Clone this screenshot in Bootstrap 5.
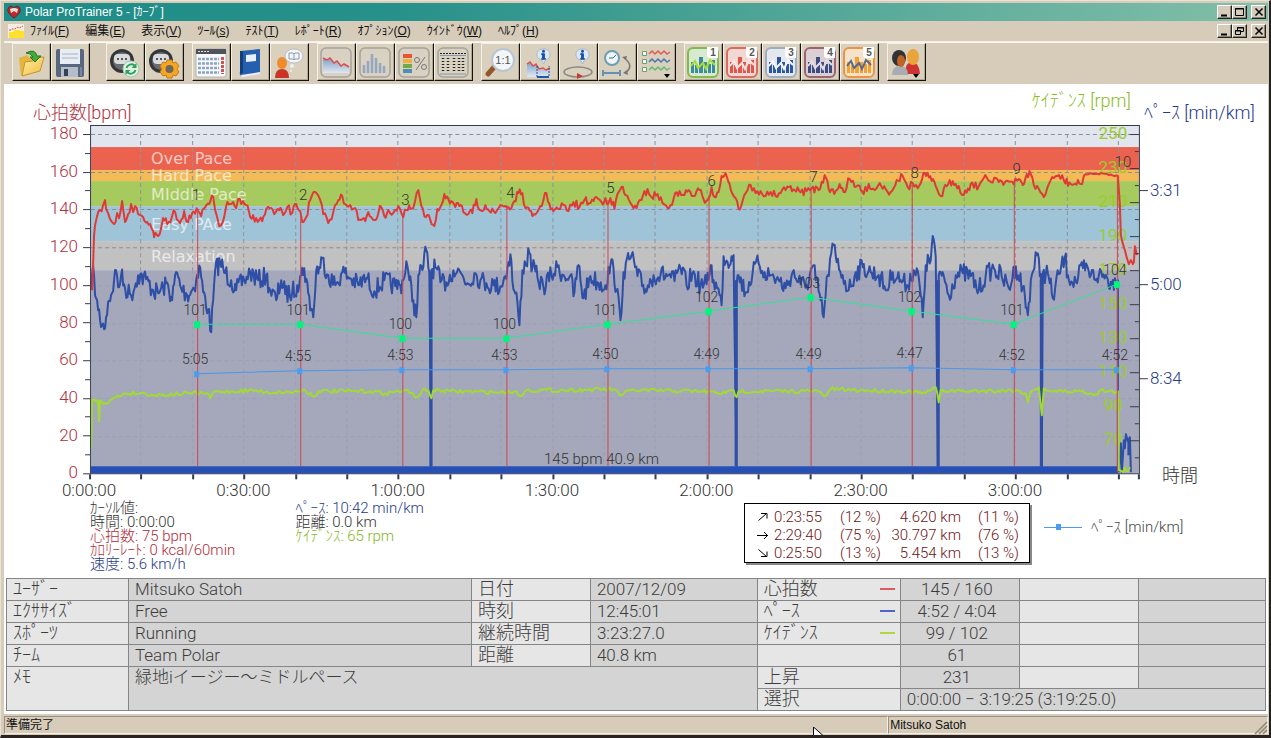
<!DOCTYPE html>
<html lang="ja">
<head>
<meta charset="utf-8">
<meta name="viewport" content="width=device-width, initial-scale=1">
<title>Polar ProTrainer 5 - [ｶｰﾌﾞ]</title>
<link rel="stylesheet" href="https://cdn.jsdelivr.net/npm/bootstrap@5.3.0/dist/css/bootstrap.min.css">
<style>
:root{--face:#d6ccb9;--ui:"Liberation Sans","Noto Sans CJK JP",sans-serif;--thin:Roboto,"Noto Sans CJK JP",sans-serif}
body{font-family:var(--ui);font-size:12px;line-height:16px;color:#111;background:var(--face)}
.window{min-height:100vh;background:var(--face);border:1px solid #e9e3d6;border-right:2px solid #222;border-bottom:3px solid #2a2320;padding:2px 1px 0 3px}
.titlebar{height:18px;background:linear-gradient(90deg,#1e8d88,#26908a 30%,#82bfa8);color:#fff;padding:0 2px 0 3px}
.menubar{height:20px;padding:0 2px 0 4px}
.menubar .menu-item{border:0;background:none;padding:0;color:#111;line-height:18px;white-space:nowrap}
.menubar .menus{gap:16px;margin-left:6px}
.cap-btn{width:15px;height:14px;padding:0;border:1px solid;border-color:#fff #222 #222 #fff;background:var(--face);display:flex;align-items:center;justify-content:center;box-shadow:inset -1px -1px #8d8577}
.toolbar{border-top:1px solid #f5f0e5;padding:1px 0 3px 8px;box-shadow:inset 0 1px #fbf7ee}
.tool-group{margin-right:16px}
.tool-group.near{margin-right:8px}
.tool{width:39px;height:38px;padding:0;background:#d9d0be;border:1px solid;border-color:#f6f1e6 #15120e #15120e #f6f1e6;box-shadow:inset -1px -1px #b0a796;display:block}
.tool svg{display:block;width:36px;height:35px}
.work{background:#fff;flex:1 0 auto;padding-bottom:3px;font-family:var(--thin);font-weight:300}
.chart{display:block;width:100%;height:auto}
.readout{display:grid;grid-template-columns:86fr 205fr 448fr 524px;min-height:78px;font-size:15px;line-height:14px;color:#333}
.readout .values{padding-top:1px;white-space:nowrap}
.t-red{color:#b02c38}.t-blue{color:#1f3a88}.t-green{color:#86b81e}
.slopes{width:286px;height:60px;margin-top:3px;border:1px solid #000;box-shadow:2px 2px #888;color:#6e1414;font-size:15px;line-height:18px;padding:4px 10px 0 8px;background:#fff}
.slopes table{width:266px;table-layout:fixed}
.slopes td,.slopes th{padding:0;text-align:right;white-space:nowrap;font-weight:300}
.slopes th{text-align:left;color:#000}
.slopes .c-dir{width:20px}.slopes .c-time{width:49px}.slopes .c-pct{width:59px}.slopes .c-dist{width:80px}
.key{margin:20px 0 0 14px;font-size:15px;color:#444;gap:9px;height:14px}
.summary{width:100%;padding:0 2px}
.summary table{width:100%;table-layout:fixed;border-collapse:collapse;font-size:18px;line-height:20px;color:#3c3c3c}
.summary td,.summary th{border:1px solid #858585;height:22px;padding:0 6px 1px 6px;background:#d4d4d4;font-weight:300;white-space:nowrap;overflow:hidden;vertical-align:top}
.summary td{font-size:17px}
.summary th,.summary .pale{background:#e6e6e6}
.summary .mid{text-align:center;padding-right:12px}
.swatch{float:right;width:15px;height:2px;margin:9px -1px 0 0}
.status{height:21px;font-size:12px;padding-top:2px}
.status .pane{border:1px solid;border-color:#989080 #f5f0e5 #f5f0e5 #989080;height:18px;line-height:16px;padding-left:1px}
.pane-main{flex:884 1 0}.pane-user{flex:378 1 0}
.pointer{left:64%;top:13px;width:13px;height:8px}
</style>
</head>
<body>
<div class="window d-flex flex-column position-relative overflow-hidden">
  <header class="titlebar d-flex align-items-center">
    <svg width="14" height="14" viewBox="0 0 14 14" aria-hidden="true"><path d="M7 13C3 10 0 7 1 4C2 0 6 1 7 3C8 1 12 0 13 4C14 7 11 10 7 13Z" fill="#c4262c" stroke="#4a2d32"/><path d="M3 4Q7 2 11 4L10 8L7 6L4 8Z" fill="#eadfdf"/></svg>
    <span class="ms-1">Polar ProTrainer 5 - [ｶｰﾌﾞ]</span>
    <div class="d-flex ms-auto">
      <button class="cap-btn" aria-label="Minimize"><svg width="11" height="10"><path d="M2 8.5h6" stroke="#000" stroke-width="2"/></svg></button>
      <button class="cap-btn" aria-label="Maximize"><svg width="11" height="10"><path d="M1.500 1.500h8v7h-8zM1 2h9" fill="none" stroke="#000"/></svg></button>
      <button class="cap-btn ms-1" aria-label="Close"><svg width="10" height="10"><path d="M1.500 1.500l7 7M8.500 1.500l-7 7" stroke="#000" stroke-width="1.500"/></svg></button>
    </div>
  </header>
  <nav class="menubar d-flex align-items-center">
    <svg width="16" height="14" viewBox="0 0 16 14" aria-hidden="true"><path d="M0 0h16v14H0z" fill="#f3eee2"/><path d="M1 8h4l2-2h4l2 1h3v7H1z" fill="#ffe12b"/><path d="M1 6h2l1-1h3l2-2 2 1 2-1 2-1" fill="none" stroke="#e44" stroke-dasharray="2 1"/></svg>
    <div class="menus d-flex">
      <button class="menu-item">ﾌｧｲﾙ(<u>F</u>)</button><button class="menu-item">編集(<u>E</u>)</button><button class="menu-item">表示(<u>V</u>)</button><button class="menu-item">ﾂｰﾙ(<u>s</u>)</button><button class="menu-item">ﾃｽﾄ(<u>T</u>)</button><button class="menu-item">ﾚﾎﾟｰﾄ(<u>R</u>)</button><button class="menu-item">ｵﾌﾟｼｮﾝ(<u>O</u>)</button><button class="menu-item">ｳｲﾝﾄﾞｳ(<u>W</u>)</button><button class="menu-item">ﾍﾙﾌﾟ(<u>H</u>)</button>
    </div>
    <div class="d-flex ms-auto">
      <button class="cap-btn" aria-label="Minimize document"><svg width="11" height="10"><path d="M2 8.500h6" stroke="#000" stroke-width="2"/></svg></button>
      <button class="cap-btn" aria-label="Restore document"><svg width="11" height="10"><path d="M3.500 4V1.500h6v4H7M3 2h7M1.500 4.500h5v4h-5zM1 5h6" fill="none" stroke="#000"/></svg></button>
      <button class="cap-btn ms-1" aria-label="Close document"><svg width="10" height="10"><path d="M1.500 1.500l7 7M8.500 1.500l-7 7" stroke="#000" stroke-width="1.500"/></svg></button>
    </div>
  </nav>

  <svg width="0" height="0" class="position-absolute" aria-hidden="true">
    <defs>
      <linearGradient id="fade" x2="0" y2="1"><stop stop-color="#7f9fc4"/><stop offset="1" stop-color="#dfe7f1"/></linearGradient>
      <linearGradient id="folder" x2="1" y2="1"><stop stop-color="#fff0a5"/><stop offset="1" stop-color="#f0bb3e"/></linearGradient>
      <symbol id="watch" viewBox="0 0 36 35"><circle cx="15" cy="16" r="12" fill="#34363a"/><circle cx="15" cy="16" r="9" fill="#686b70"/><rect x="7" y="9" width="16" height="10" rx="4" fill="#d9dbdd"/><path d="M10 14h2m2 0h2m2 0h2" stroke="#555" stroke-width="2"/></symbol>
      <symbol id="frame" viewBox="0 0 36 35"><rect x="3" y="3" width="30" height="29" rx="5" fill="#d9d1c1" stroke="#a5a29c" stroke-width="1.500"/></symbol>
      <symbol id="info" viewBox="0 0 16 18"><path d="M8 1C3 1 1 4 1 7s2 5 5 6l2 4 2-4c3-1 5-3 5-6s-2-6-7-6z" fill="#dce9f4" stroke="#a2b4c8"/><circle cx="8" cy="3.500" r="1.600" fill="#1b4fa6"/><path d="M6 6h3v5h1v1H6v-1h1V7H6z" fill="#1b4fa6" stroke="#1b4fa6"/></symbol>
      <symbol id="bars" viewBox="0 0 36 35"><rect x="3" y="3" width="30" height="29" rx="5" fill="var(--tint)" stroke="var(--edge)" stroke-width="2"/><path d="M6 28V17h3v11zm4 0V20h3v8zm4 0V12h4v16zm5 0V17h3v11zm4 0V19h3v9zm4 0V15h3v13z" fill="var(--bar)"/><path d="M6 21l4-5 3 7 5-5 3 6 4-9 5 5" fill="none" stroke="var(--line)" stroke-width="2"/><path d="M22 2h11v11h-8q-3 0-3-3z" fill="#fff"/></symbol>
    </defs>
  </svg>
  <div class="toolbar d-flex">
    <div class="tool-group d-flex">
      <button class="tool" aria-label="開く"><svg viewBox="0 0 36 35"><path d="M6 13l8-3 3 3 11-2 1 4-8 13-13 3z" fill="#e4b63e"/><path d="M9 31l3-14 8-1 3-3 8-1-4 14z" fill="url(#folder)" stroke="#c8952c"/><path d="M13 8q9-5 11 3h4l-6 6-5-5h3q-2-4-7-4z" fill="#43ac38" stroke="#237524"/></svg></button>
      <button class="tool" aria-label="保存"><svg viewBox="0 0 36 35"><rect x="4" y="4" width="28" height="28" rx="2" fill="#586680"/><path d="M8 4h20v15H8z" fill="#e8edf3"/><path d="M10 9h16M10 13h16" stroke="#a8b2c0"/><path d="M9 22h17v10H9z" fill="#b4bdca"/><path d="M12 24h4v7h-4z" fill="#35405a"/><path d="M28 22h2v9h-2z" fill="#7887a2"/></svg></button>
    </div>
    <div class="tool-group near d-flex">
      <button class="tool" aria-label="転送"><svg viewBox="0 0 36 35"><use href="#watch"/><circle cx="24" cy="24" r="8" fill="#e2f1e6" stroke="#9fc7ad"/><path d="M19.500 23a5 5 0 0 1 8-2.500M28.500 25a5 5 0 0 1-8 2.500" fill="none" stroke="#2ba05a" stroke-width="2"/><path d="M29.500 18v5h-5zM18.500 30v-5h5z" fill="#2ba05a"/></svg></button>
      <button class="tool" aria-label="機器設定"><svg viewBox="0 0 36 35"><use href="#watch"/><path d="M21 15h5l1 3 3-1 3 4-2 3 2 3-3 4-3-1-1 3h-5l-1-3-3 1-3-4 2-3-2-3 3-4 3 1z" fill="#f5a623" stroke="#c87d10"/><circle cx="23.500" cy="24" r="4" fill="#6f6759"/></svg></button>
    </div>
    <div class="tool-group near d-flex">
      <button class="tool" aria-label="カレンダー"><svg viewBox="0 0 36 35"><rect x="3" y="4" width="30" height="28" rx="2" fill="#f8f9fb" stroke="#b3b4b9"/><path d="M3 4h30v5H3z" fill="#50535a"/><path d="M5 6.500h12" stroke="#ddd" stroke-dasharray="2 1"/><path d="M5 14h21M5 18.500h21M5 23h21M5 27.500h21" stroke="#8ba3c5" stroke-width="2.500" stroke-dasharray="3 1"/><path d="M29.500 12v17" stroke="#d45454" stroke-width="3" stroke-dasharray="3 1"/></svg></button>
      <button class="tool" aria-label="日誌"><svg viewBox="0 0 36 35"><path d="M8 6l20-2v24l-19 3q-2-2-1-4z" fill="#2460ad"/><path d="M8 6l3 0v22l-3 1z" fill="#153f7b"/><path d="M9 30l19-3v2L10 32z" fill="#eef"/><path d="M14 10l10-1v7l-10 1z" fill="#e8f0fa"/></svg></button>
      <button class="tool" aria-label="人物"><svg viewBox="0 0 36 35"><ellipse cx="11" cy="18" rx="5" ry="6" fill="#ee8b2a"/><path d="M4 33q0-9 7-9t7 9z" fill="#c93426"/><ellipse cx="23" cy="11" rx="9" ry="7" fill="#f2f5f9" stroke="#b8c0ca"/><path d="M18 8h4l1 1 1-1h4v6h-4l-1 1-1-1h-4zM23 9v5" fill="none" stroke="#8d99a8"/><circle cx="21" cy="21" r="2" fill="#edf0f5"/><circle cx="20" cy="26" r="1" fill="#edf0f5"/></svg></button>
    </div>
    <div class="tool-group near d-flex">
      <button class="tool" aria-label="曲線"><svg viewBox="0 0 36 35"><use href="#frame"/><path d="M5 13l4 2 3-2 4 5 3-2 4 5 3-2 5 3v6H5z" fill="url(#fade)"/><path d="M5 13l4 2 3-2 4 5 3-2 4 5 3-2 5 3" fill="none" stroke="#dc4c4c" stroke-width="1.500"/></svg></button>
      <button class="tool" aria-label="分布"><svg viewBox="0 0 36 35"><use href="#frame"/><path d="M7 28v-8M11 28V16M15 28V9M19 28V13M23 28v-10M27 28v-7" stroke="#93a8c0" stroke-width="2.500"/></svg></button>
      <button class="tool" aria-label="ゾーン"><svg viewBox="0 0 36 35"><use href="#frame"/><path d="M7 11h9" stroke="#e85336" stroke-width="4"/><path d="M7 16h9" stroke="#f3ae35" stroke-width="4"/><path d="M7 21h9" stroke="#72a948" stroke-width="4"/><path d="M7 26h9" stroke="#4d8fb8" stroke-width="4"/><g fill="none" stroke="#777"><circle cx="21" cy="15" r="2.500"/><circle cx="28" cy="22" r="2.500"/><path d="M29 12l-9 13"/></g></svg></button>
      <button class="tool" aria-label="一覧"><svg viewBox="0 0 36 35"><use href="#frame"/><path d="M5 8.500h26" stroke="#222" stroke-dasharray="2 1"/><path d="M5 10.500h26M5 29h26" stroke="#8497ab"/><path d="M8 13v15M13 13v15M19 13v15M24 13v15M28 13v15" stroke="#222" stroke-width="2.500" stroke-dasharray="1 2"/></svg></button>
    </div>
    <div class="tool-group near d-flex">
      <button class="tool" aria-label="等倍"><svg viewBox="0 0 36 35"><path d="M14 20L6 29" stroke="#93572a" stroke-width="5" stroke-linecap="round"/><circle cx="21" cy="15" r="11" fill="#f3f6f8" stroke="#b7c6d2" stroke-width="2"/><text x="21" y="19" text-anchor="middle" font-size="11" fill="#555">1:1</text></svg></button>
      <button class="tool" aria-label="曲線情報"><svg viewBox="0 0 36 35"><use href="#info" x="15" y="3" width="15" height="17"/><path d="M6 19l3-2 3 4 3-2 3 5 4-1 3 2 4-2v9H6z" fill="url(#fade)"/><path d="M6 19l3-2 3 4 3-2 3 5 4-1 3 2 4-2" stroke="#dd5050" fill="none" stroke-width="1.500"/><path d="M16 21v11h12V21" fill="none" stroke="#264e98" stroke-dasharray="2 1"/><path d="M16 32h12" stroke="#2356ad" stroke-width="2"/></svg></button>
      <button class="tool" aria-label="ラップ情報"><svg viewBox="0 0 36 35"><use href="#info" x="15" y="3" width="15" height="17"/><ellipse cx="18" cy="27" rx="14" ry="5" fill="none" stroke="#8a8a86" stroke-width="1.500"/><path d="M17 28l6 3-6 3z" fill="#c33b31"/></svg></button>
      <button class="tool" aria-label="時間距離"><svg viewBox="0 0 36 35"><circle cx="13" cy="13" r="7" fill="#eef5f9" stroke="#6e9eb3" stroke-width="2"/><path d="M10 13h4l3-3" fill="none" stroke="#386e89"/><path d="M4 28h17M4 25v6M21 25v6" stroke="#6691b2" stroke-width="2"/><path d="M25 13q11 8 1 15" fill="none" stroke="#777" stroke-width="1.500"/><path d="M23 12l5-1-1 4zM24 28l4-3 1 5z" fill="#777"/></svg></button>
      <button class="tool" aria-label="曲線選択"><svg viewBox="0 0 36 35"><g fill="#fff" stroke="#65a16b"><path d="M4.500 6.500h4v4h-4zM4.500 14.500h4v4h-4zM4.500 22.500h4v4h-4z"/></g><path d="M11 9l3-3 3 3 3-3 3 3 3-3 3 3 3-2" stroke="#e25c58" stroke-width="1.500" fill="none"/><path d="M11 17l3-3 3 3 3-3 3 3 3-3 3 3 3-2" stroke="#4876ae" stroke-width="1.500" fill="none"/><path d="M11 25l3-3 3 3 3-3 3 3 3-3 3 3 3-2" stroke="#63bd71" stroke-width="1.500" fill="none"/><path d="M26 29h6l-3 4z"/></svg></button>
    </div>
    <div class="tool-group near d-flex" id="presets"></div>
    <button class="tool" aria-label="ユーザー"><svg viewBox="0 0 36 35"><path d="M17 29q0-12 7-12t8 12z" fill="#cc3331"/><ellipse cx="25" cy="12" rx="6" ry="8" fill="#eba33c"/><path d="M4 30q0-9 8-9t8 9z" fill="#a8adb3"/><ellipse cx="11" cy="13" rx="7" ry="8" fill="#303236"/><ellipse cx="13" cy="16" rx="4" ry="6" fill="#c06325"/><path d="M25 29h6l-3 4z"/></svg></button>
  </div>

  <main class="work">
    <svg class="chart" viewBox="4 84 1263 416" role="img" aria-label="心拍数、ペース、ケイデンスの曲線" id="chart"></svg>
    <section class="readout">
      <div></div>
      <div class="values"><div>ｶｰｿﾙ値:</div><div>時間: 0:00:00</div><div class="t-red">心拍数: 75 bpm</div><div class="t-red">ｶﾛﾘｰﾚｰﾄ: 0 kcal/60min</div><div class="t-blue">速度: 5.6 km/h</div></div>
      <div class="values"><div class="t-blue">ﾍﾟｰｽ: 10:42 min/km</div><div>距離: 0.0 km</div><div class="t-green">ｹｲﾃﾞﾝｽ: 65 rpm</div></div>
      <div class="d-flex align-items-start">
        <div class="slopes"><table>
          <colgroup><col class="c-dir"><col class="c-time"><col class="c-pct"><col class="c-dist"><col></colgroup>
          <tr><th aria-label="上り"><svg width="12" height="12" class="d-block ms-1"><path d="M1.500 9.500l8-7M4 2.500h6v5" fill="none" stroke="#000"/></svg></th><td>0:23:55</td><td>(12 %)</td><td>4.620 km</td><td>(11 %)</td></tr>
          <tr><th aria-label="平地"><svg width="12" height="12" class="d-block ms-1"><path d="M0 6.500h11M7 3l3.500 3.500L7 10" fill="none" stroke="#000"/></svg></th><td>2:29:40</td><td>(75 %)</td><td>30.797 km</td><td>(76 %)</td></tr>
          <tr><th aria-label="下り"><svg width="12" height="12" class="d-block ms-1"><path d="M1.500 2.500l8 7M4 9.500h6v-5" fill="none" stroke="#000"/></svg></th><td>0:25:50</td><td>(13 %)</td><td>5.454 km</td><td>(13 %)</td></tr>
        </table></div>
        <div class="key d-flex align-items-center"><svg width="38" height="8"><path d="M0 4.500h38" stroke="#4a9cf0"/><path d="M12 1h5v6h-5z" fill="#4a9cf0"/></svg><span>ﾍﾟｰｽ [min/km]</span></div>
      </div>
    </section>
    <section class="summary"><table>
      <colgroup><col style="width:9.69%"><col style="width:27.24%"><col style="width:9.450%"><col style="width:13.26%"><col style="width:11.36%"><col style="width:9.450%"><col style="width:9.450%"><col style="width:10.1%"></colgroup>
      <tr><th>ﾕｰｻﾞｰ</th><td>Mitsuko Satoh</td><th>日付</th><td>2007/12/09</td><th>心拍数<span class="swatch" style="background:#e05864"></span></th><td class="mid">145 / 160</td><td class="pale"></td><td></td></tr>
      <tr><th>ｴｸｻｻｲｽﾞ</th><td>Free</td><th>時刻</th><td>12:45:01</td><th>ﾍﾟｰｽ<span class="swatch" style="background:#5064c8"></span></th><td class="mid">4:52 / 4:04</td><td class="pale"></td><td></td></tr>
      <tr><th>ｽﾎﾟｰﾂ</th><td>Running</td><th>継続時間</th><td>3:23:27.0</td><th>ｹｲﾃﾞﾝｽ<span class="swatch" style="background:#b0d840"></span></th><td class="mid">99 / 102</td><td class="pale"></td><td></td></tr>
      <tr><th>ﾁｰﾑ</th><td>Team Polar</td><th>距離</th><td>40.8 km</td><th></th><td class="mid">61</td><td class="pale"></td><td></td></tr>
      <tr><th rowspan="2">ﾒﾓ</th><td rowspan="2" colspan="3">緑地iイージー～ミドルペース</td><th>上昇</th><td class="mid">231</td><td class="pale"></td><td></td></tr>
      <tr><th>選択</th><td colspan="3">0:00:00 − 3:19:25 (3:19:25.0)</td></tr>
    </table></section>
  </main>
  <footer class="status d-flex position-relative">
    <div class="pane pane-main">準備完了</div><div class="pane pane-user">Mitsuko Satoh</div>
    <svg class="position-absolute end-0 bottom-0" width="14" height="14" aria-hidden="true"><path d="M1 13L13 1M5 13l8-8M9 13l4-4" stroke="#8f8675" stroke-width="1.500"/></svg>
    <svg class="pointer position-absolute" viewBox="0 0 13 8" aria-hidden="true"><path d="M.5 0v9h10z" fill="#fff" stroke="#000"/></svg>
  </footer>
</div>
<script src="https://cdn.jsdelivr.net/npm/bootstrap@5.3.0/dist/js/bootstrap.bundle.min.js"></script>
<script>
// Curve preset buttons
const presets=[['#d5ead0','#86b84e','#3c8a9a','#a8dc3c'],['#f2d8d2','#dd6a60','#e2554a','#f7e6e4'],['#e4e8ee','#9fadc0','#2b559e','#f3f6fa'],['#dccfd3','#9c6470','#3a4c80','#e4dbe4'],['#f6e2c8','#e8954a','#f2a133','#5a6a88']];
document.getElementById('presets').innerHTML=presets.map((p,i)=>`<button class="tool" aria-label="曲線 ${i+1}"><svg viewBox="0 0 36 35" style="--tint:${p[0]};--edge:${p[1]};--bar:${p[2]};--line:${p[3]}"><use href="#bars"/><text x="28" y="11" text-anchor="middle" font-size="10" font-weight="700" fill="#555">${i+1}</text></svg></button>`).join('');

// Chart
let out='';
const rect=(x,y,w,h,f)=>out+=`<rect x="${x}" y="${y}" width="${w}" height="${h}" fill="${f}"/>`;
const path=(d,c,w=1,x='')=>out+=`<path d="${d}" fill="none" stroke="${c}" stroke-width="${w}" ${x}/>`;
const text=(x,y,s,c,size,anchor='middle',x2='')=>out+=`<text x="${x}" y="${y}" fill="${c}" font-size="${size}" text-anchor="${anchor}" ${x2}>${s}</text>`;
[[126,21,'#e1e5ed'],[147,23,'#eb624f'],[170,11,'#f4ba56'],[181,25,'#a6ca5d'],[206,35,'#a0c4d7'],[241,29,'#c2c1c2'],[270,203,'#a4a8ba']].forEach(b=>rect(91,b[0],1047,b[1],b[2]));
const times=[];for(let i=1;i<=20;i++)times.push(Math.round(90+51.4*i));
const dash='stroke-dasharray="4 3"';
for(let i=0;i<9;i++){const y=Math.round(134+i*37.7)+.5;path(`M91 ${y}H1138`,i<4?'#8a8e98':'#9c9fb2',1,dash)}
times.forEach(x=>{path(`M${x-.5} 134V270`,'#8f939c',1,dash);path(`M${x-.5} 270V466`,'#9c9fb2',1,dash)});
[['Over Pace',164],['Hard Pace',181],['MIddle Pace',200],['Easy PAce',230],['Relaxation',262]].forEach(z=>text(151,z[1],z[0],'#fff',16,'start','opacity=".65" font-family="DejaVu Sans, sans-serif" font-weight="400"'));
for(let i=0;i<10;i++)text(1112,139+i*34,250-20*i,'#9ccc2c',17,'middle','font-weight="400"');
rect(91,466,1026,7,'#2450b8');

let seed=7;
const rnd=()=>(seed=(seed*16807)%2147483647)/2147483647-.5;
function trace(str,amp,step,color,w){
  const p=str.trim().split(/\s+/).map(s=>s.split(',').map(Number));
  let d=`M${p[0]}`;
  for(let i=1;i<p.length;i++){
    const [a,b]=p[i-1],[c,e]=p[i],n=Math.max(1,Math.round((c-a)/step));
    for(let k=1;k<n;k++)d+=`L${(a+(c-a)*k/n).toFixed(1)},${(b+(e-b)*k/n+rnd()*amp*2).toFixed(1)}`;
    d+=`L${c},${e}`;
  }
  path(d,color,w,'stroke-linejoin="round"');
}
trace(`91,290 92,275 94,276 96,298 98,310 100,320 104,329 106,317 108,302 111,295 114,280 116,270 118,287 121,275 125,288 131,295 138,275 146,279 153,290 158,293 163,287 168,285 172,300 176,272 181,288 187,295 192,290 196,280 200,267 203,292 208,309 211,332 213,300 215,270 220,262 225,273 231,280 236,290 244,280 250,272 258,280 266,276 270,290 276,300 281,280 285,294 292,292 297,285 301,275 304,268 308,293 313,317 316,270 320,268 322,258 328,275 335,285 342,272 350,278 358,285 366,278 374,291 384,280 395,286 400,285 403,280 406,261 409,280 413,300 416,317 418,275 422,270 426,250 429,272 431,466 431,270 435,267 440,282 446,282 453,270 460,272 467,283 474,273 480,280 486,283 493,285 500,286 505,276 508,262 510,254 513,289 517,302 519,325 522,270 529,253 532,268 537,277 543,287 551,275 557,267 563,275 570,275 573,296 578,265 583,298 590,276 598,283 605,285 610,265 613,268 616,290 620,320 623,272 631,255 637,276 645,289 653,275 660,275 668,275 674,281 680,268 686,285 692,273 700,285 706,284 710,265 713,280 719,295 721,305 723,256 727,262 731,256 733,255 736,466 736,284 738,275 745,292 752,273 758,263 764,272 770,275 778,280 785,288 792,272 800,284 806,285 813,265 815,280 820,300 823,317 827,275 833,245 836,262 842,275 848,290 855,272 862,267 870,272 878,275 886,290 892,272 900,280 906,285 913,270 918,277 922,317 925,265 930,260 932,236 935,257 937,466 938,275 942,272 948,295 955,275 962,273 970,276 978,290 985,275 993,268 1001,277 1008,288 1015,266 1022,287 1027,315 1030,280 1036,255 1040,274 1041,466 1042,273 1047,273 1052,298 1058,274 1064,257 1067,275 1075,282 1082,268 1090,275 1098,275 1106,277 1111,285 1114,278 1117,280 1117,472`,10,1.1,'#2e4fa5',2);
[431,736,938,1041].forEach(x=>path(`M${x-.5} 280V466`,'#2e4fa5',3));
trace('1118,472 1120,443 1121,472 1123,440 1124,448 1125,434 1127,441 1129,437 1130,472',0,2,'#2e4fa5',2);
path('M1128 440V455','#2e4fa5',3);
trace(`92,290 93,265 94,235 95,225 97,216 100,210 103,205 105,200 106,209 108,213 110,219 112,222 114,224 117,213 119,218 122,201 125,222 128,214 131,204 133,212 135,206 138,214 143,217 147,222 150,224 153,231 154,237 158,236 161,228 163,218 167,224 172,216 175,212 180,223 184,211 188,222 192,213 198,211 201,216 205,207 209,204 213,197 215,210 219,226 224,217 226,206 230,204 233,202 236,208 238,199 241,204 246,205 250,217 256,218 262,221 266,209 271,208 274,214 279,210 283,215 287,207 292,213 296,204 300,211 302,222 306,217 310,200 315,192 320,200 323,214 328,223 333,212 338,200 342,196 345,204 350,205 355,208 358,220 365,221 368,212 374,220 381,207 384,216 388,210 393,213 398,206 403,217 406,210 413,208 418,190 421,206 424,216 430,220 434,226 437,209 441,205 444,194 448,199 451,201 455,207 459,206 463,212 468,214 472,213 476,199 480,210 485,205 489,211 495,213 500,205 505,206 511,208 514,201 518,193 522,193 525,208 532,216 538,210 543,200 546,193 549,204 553,211 558,209 563,205 568,211 573,202 579,207 584,200 590,203 596,197 601,202 605,198 608,203 610,198 614,209 617,194 621,187 625,195 630,203 636,208 641,200 647,189 651,197 657,194 662,203 667,208 673,199 679,191 684,195 688,190 693,196 699,190 703,199 707,200 711,187 714,197 718,192 721,176 725,173 729,184 732,194 735,198 738,209 742,201 747,190 750,185 755,193 760,191 765,196 770,192 775,196 780,193 785,190 790,186 794,190 800,192 806,191 811,188 818,190 824,175 828,189 835,191 839,184 843,192 849,179 854,187 859,186 863,194 868,184 874,190 879,183 885,189 890,192 896,180 902,176 907,187 912,183 917,188 920,183 924,173 931,181 935,186 940,196 946,186 952,181 958,186 963,195 970,184 978,186 983,178 989,181 995,178 1001,181 1007,181 1013,184 1018,179 1022,185 1026,174 1030,174 1033,185 1038,189 1043,197 1048,184 1053,178 1058,175 1063,180 1070,184 1080,184 1084,174`,4,1.5,'#e03a38',2);
trace('1084,174 1094,174 1100,173 1108,175 1117,176 1119,205 1120,235 1123,247 1126,258 1128,264 1130,260 1132,264 1133,262 1134,246 1136,255',1,2,'#e03a38',2);
trace(`91,447 92,400 98,400 99,421 100,400 105,403 112,399 125,393 145,393 155,395 190,393 207,393 210,398 213,392 255,390 265,392 290,392 305,390 314,396 318,391 370,391 385,393 405,390 417,397 422,390 428,390 431,398 433,390 450,391 500,392 514,391 520,396 526,390 560,390 613,389 621,395 630,390 700,391 725,393 733,390 736,397 738,391 818,391 824,396 830,389 860,390 900,391 925,393 935,387 938,402 940,390 960,391 1015,390 1025,393 1027,402 1030,392 1033,390 1038,387 1041,415 1043,388 1050,391 1080,391 1095,394 1100,390 1115,392 1117,391 1118,470 1122,472 1124,467 1127,471 1129,467`,2,2,'#a2da35',2);

const lapX=[197,300,402,506,607,708,810,911,1013,1116];
const lapTop=[212,213,217,205,200,195,188,185,182,176];
const lapText=[[196,200],[303,200],[405,205],[510,198],[610,193],[711,186],[813,182],[914,178],[1016,174],[1122,167]];
const cad=[[324,101],[324,101],[338,100],[338,100],[324,101],[311,102],[297,103],[311,102],[324,101],[284,104]];
const pace=[[373,'5:05'],[370,'4:55'],[369,'4:53'],[369,'4:53'],[368,'4:50'],[368,'4:49'],[368,'4:49'],[367,'4:47'],[369,'4:52'],[369,'4:52']];
lapX.forEach((x,i)=>path(`M${x+.5} ${lapTop[i]}V${i==9?472:466}`,'#d04550',1));
path('M'+lapX.map((x,i)=>`${x},${cad[i][0]}`).join('L'),'#35e096');
path('M'+lapX.map((x,i)=>`${x},${pace[i][0]}.500`).join('L'),'#4a96ea');
lapX.forEach((x,i)=>{
  rect(x-3,cad[i][0]-3,6,7,'#00f57c');rect(x-3,pace[i][0]-2,5,6,'#4a9cf0');
  text(lapText[i][0],lapText[i][1],i+1,'#333',15);
  text(x-2,cad[i][0]-9,cad[i][1],'#333',14);
  text(x-2,pace[i][0]-9,pace[i][1],'#333',14);
});
text(601,464,'145 bpm 40.9 km','#333',15);

path('M90.500 125V473.500H1138.500V125.500H90.500','#343a50');
for(let i=0;i<19;i++){const y=Math.round(134+i*18.83)+.5;path(`M${i%2?85:83} ${y}H90`,'#343a50')}
for(let i=0;i<10;i++)text(78,139+i*37.67,180-20*i,'#b03040',17,'end');
for(let i=0;i<20;i++){const y=134.5+17*i;path(`M${i%2?1134:1129} ${y}H1138`,'#343a50')}
[[190,'3:31'],[284,'5:00'],[378,'8:34']].forEach(a=>{path(`M1138 ${a[0]+.5}H1147`,'#343a50');text(1149,a[0]+6,a[1],'#1f3a88',17,'start')});
[90,...times,1138].forEach(x=>path(`M${x} 474V479`,'#343a50',2));
['0:00:00','0:30:00','1:00:00','1:30:00','2:00:00','2:30:00','3:00:00'].forEach((s,i)=>text(89+i*154.2,496,s,'#333',17));
text(33,119,'心拍数[bpm]','#b03040',18,'start');
text(1031,107,'ｹｲﾃﾞﾝｽ [rpm]','#8cbc1e',18,'start');
text(1143,119,'ﾍﾟｰｽ [min/km]','#1f3a88',18,'start');
text(1161,482,'時間','#333',18,'start');
document.getElementById('chart').innerHTML=out;
</script>
</body>
</html>
